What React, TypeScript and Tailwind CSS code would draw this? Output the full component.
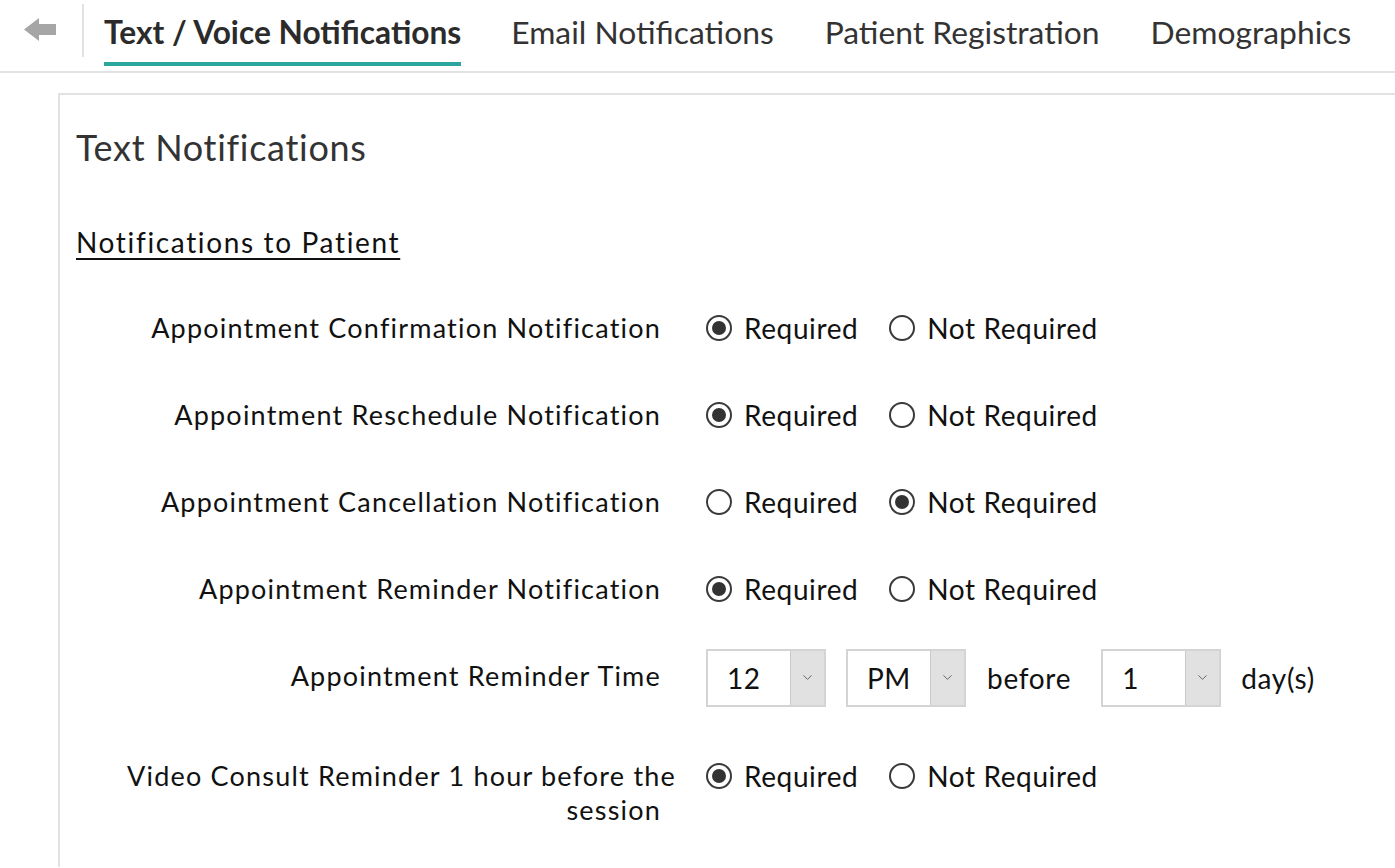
import { ChevronDown } from "lucide-react";

type Choice = "req" | "not";

const rows: { label: string; value: Choice }[] = [
  { label: "Appointment Confirmation Notification", value: "req" },
  { label: "Appointment Reschedule Notification", value: "req" },
  { label: "Appointment Cancellation Notification", value: "not" },
  { label: "Appointment Reminder Notification", value: "req" },
];

function Radio({ checked, label }: { checked: boolean; label: string }) {
  return (
    <label className="flex items-center gap-[12px]">
      <span className="flex h-[26px] w-[26px] items-center justify-center rounded-full border-2 border-[#3a3a3a] bg-white">
        {checked && <span className="h-[14px] w-[14px] rounded-full bg-[#333]" />}
      </span>
      <span className="text-[28px] tracking-[0.6px]">{label}</span>
    </label>
  );
}

function RadioPair({ value }: { value: Choice }) {
  return (
    <div className="flex items-center gap-[31px]">
      <Radio checked={value === "req"} label="Required" />
      <Radio checked={value === "not"} label="Not Required" />
    </div>
  );
}

function Select({ value }: { value: string }) {
  return (
    <div className="flex h-[58px] w-[120px] border-2 border-[#d4d4d4] bg-white">
      <div className="flex flex-1 items-center pl-[19px] text-[28px] tracking-[0.5px]">{value}</div>
      <div className="flex w-[34px] items-center justify-center border-l border-[#c9c9c9] bg-[#e1e1e1]">
        <ChevronDown size={15} strokeWidth={1.4} className="text-[#555]" />
      </div>
    </div>
  );
}

export default function App() {
  const tabs = ["Email Notifications", "Patient Registration", "Demographics"];
  return (
    <div className="min-h-screen overflow-hidden bg-white text-[#1a1a1a]" style={{ fontFamily: "Lato, 'Open Sans', sans-serif" }}>
      {/* Tabs */}
      <div className="flex h-[73px] items-start border-b-2 border-[#e2e2e2]">
        <div className="mt-[4px] flex h-[53px] w-[84px] items-center justify-center border-r-2 border-[#e2e2e2]">
          <svg width="32" height="23" viewBox="0 0 32 23" className="-ml-[3px] -mt-[3px]">
            <path d="M0 11.5 L15 0 V6 H32 V17 H15 V23 Z" fill="#a6a6a6" />
          </svg>
        </div>
        <div className="ml-[20px] flex h-full whitespace-nowrap text-[31.8px] text-[#333]">
          <div className="mr-[50px] flex h-[66px] items-center border-b-[4px] border-[#29a69e] pt-[4px] text-[31.7px] font-bold text-[#2b2b2b]">
            Text / Voice Notifications
          </div>
          <div className="flex gap-[51px]">
            {tabs.map((t) => (
              <div key={t} className="flex h-[66px] items-center pb-[4px] pt-[4px]">
                {t}
              </div>
            ))}
          </div>
        </div>
      </div>

      {/* Panel */}
      <div className="ml-[58px] mt-[20px] border-l-2 border-t-2 border-[#e2e2e2] pb-[40px] pl-[16px] pt-[27px]">
        <h2 className="text-[36px] leading-[50px] tracking-[0.7px] text-[#333]">Text Notifications</h2>
        <h3 className="mt-[52px] text-[28px] leading-[36px] tracking-[1.65px] text-[#111] underline decoration-[2px] underline-offset-[5px]">
          Notifications to Patient
        </h3>

        <div className="mt-[25px] flex flex-col text-[#111]">
          {rows.map((r) => (
            <div key={r.label} className="flex h-[87px] items-center">
              <div className="w-[585px] text-right text-[27px] tracking-[1.2px]">{r.label}</div>
              <div className="ml-[45px] -mt-[2px]">
                <RadioPair value={r.value} />
              </div>
            </div>
          ))}
          <div className="flex h-[87px] items-center">
            <div className="w-[585px] text-right text-[27px] tracking-[1.2px]">Appointment Reminder Time</div>
            <div className="ml-[45px] mt-[2px] flex items-center text-[28px] tracking-[0.7px]">
              <Select value="12" />
              <div className="ml-[20px]">
                <Select value="PM" />
              </div>
              <span className="ml-[21px]">before</span>
              <div className="ml-[30px]">
                <Select value="1" />
              </div>
              <span className="ml-[20px]">day(s)</span>
            </div>
          </div>
          <div className="mt-[39px] flex items-start">
            <div className="w-[585px] text-right text-[27px] leading-[34px] tracking-[1.2px]">
              <span className="-mr-[15px] block">Video Consult Reminder 1 hour before the</span>
              <span className="block">session</span>
            </div>
            <div className="ml-[45px] flex h-[34px] items-center">
              <RadioPair value="req" />
            </div>
          </div>
        </div>
      </div>
    </div>
  );
}
